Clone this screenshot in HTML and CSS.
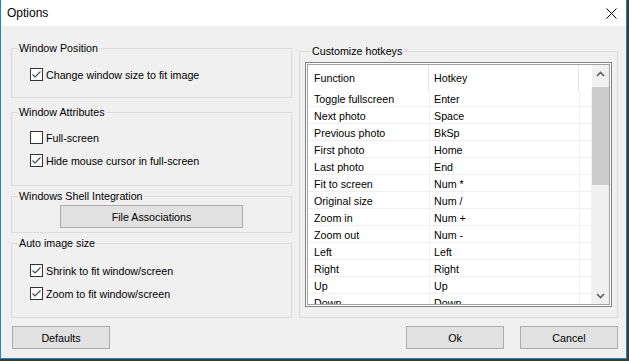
FILE: index.html
```html
<!DOCTYPE html>
<html>
<head>
<meta charset="utf-8">
<link rel="stylesheet" href="styles.css">
</head>
<body>
<div class="window">
  <div class="titlebar">
    <span class="title">Options</span>
    <svg class="close" width="11" height="11" viewBox="0 0 11 11"><path d="M0.5 0.5 L10.5 10.5 M10.5 0.5 L0.5 10.5" stroke="#000" stroke-width="1" fill="none"/></svg>
  </div>
  <div class="content">
    <div class="left">
      <fieldset class="group g1">
        <legend>Window Position</legend>
        <div class="check first"><span class="box"><svg width="11" height="11" viewBox="0 0 11 11"><path d="M1.5 5.5 L4 8 L9.5 2.5" stroke="#444" stroke-width="1.1" fill="none"/></svg></span>Change window size to fit image</div>
      </fieldset>
      <fieldset class="group g2">
        <legend>Window Attributes</legend>
        <div class="check first"><span class="box"></span>Full-screen</div>
        <div class="check"><span class="box"><svg width="11" height="11" viewBox="0 0 11 11"><path d="M1.5 5.5 L4 8 L9.5 2.5" stroke="#444" stroke-width="1.1" fill="none"/></svg></span>Hide mouse cursor in full-screen</div>
      </fieldset>
      <fieldset class="group g3">
        <legend>Windows Shell Integration</legend>
        <button class="btn assoc">File Associations</button>
      </fieldset>
      <fieldset class="group g4">
        <legend>Auto image size</legend>
        <div class="check first"><span class="box"><svg width="11" height="11" viewBox="0 0 11 11"><path d="M1.5 5.5 L4 8 L9.5 2.5" stroke="#444" stroke-width="1.1" fill="none"/></svg></span>Shrink to fit window/screen</div>
        <div class="check"><span class="box"><svg width="11" height="11" viewBox="0 0 11 11"><path d="M1.5 5.5 L4 8 L9.5 2.5" stroke="#444" stroke-width="1.1" fill="none"/></svg></span>Zoom to fit window/screen</div>
      </fieldset>
    </div>
    <fieldset class="group hotkeys">
      <legend>Customize hotkeys</legend>
      <div class="listview">
        <div class="lv-inner">
          <div class="lv-main">
            <div class="lv-header">
              <div class="hc c1">Function</div>
              <div class="hc c2">Hotkey</div>
              <div class="hc c3"></div>
            </div>
            <div class="lv-rows">
              <div class="row"><div class="cell c1">Toggle fullscreen</div><div class="cell c2">Enter</div><div class="cell c3"></div></div>
              <div class="row"><div class="cell c1">Next photo</div><div class="cell c2">Space</div><div class="cell c3"></div></div>
              <div class="row"><div class="cell c1">Previous photo</div><div class="cell c2">BkSp</div><div class="cell c3"></div></div>
              <div class="row"><div class="cell c1">First photo</div><div class="cell c2">Home</div><div class="cell c3"></div></div>
              <div class="row"><div class="cell c1">Last photo</div><div class="cell c2">End</div><div class="cell c3"></div></div>
              <div class="row"><div class="cell c1">Fit to screen</div><div class="cell c2">Num *</div><div class="cell c3"></div></div>
              <div class="row"><div class="cell c1">Original size</div><div class="cell c2">Num /</div><div class="cell c3"></div></div>
              <div class="row"><div class="cell c1">Zoom in</div><div class="cell c2">Num +</div><div class="cell c3"></div></div>
              <div class="row"><div class="cell c1">Zoom out</div><div class="cell c2">Num -</div><div class="cell c3"></div></div>
              <div class="row"><div class="cell c1">Left</div><div class="cell c2">Left</div><div class="cell c3"></div></div>
              <div class="row"><div class="cell c1">Right</div><div class="cell c2">Right</div><div class="cell c3"></div></div>
              <div class="row"><div class="cell c1">Up</div><div class="cell c2">Up</div><div class="cell c3"></div></div>
              <div class="row"><div class="cell c1">Down</div><div class="cell c2">Down</div><div class="cell c3"></div></div>
            </div>
          </div>
          <div class="scrollbar">
            <div class="sb-btn"><svg width="9" height="6" viewBox="0 0 9 6"><path d="M1 5 L4.5 1.5 L8 5" stroke="#606060" stroke-width="1.6" fill="none"/></svg></div>
            <div class="sb-track"><div class="sb-thumb"></div></div>
            <div class="sb-btn"><svg width="9" height="6" viewBox="0 0 9 6"><path d="M1 1 L4.5 4.5 L8 1" stroke="#606060" stroke-width="1.6" fill="none"/></svg></div>
          </div>
        </div>
      </div>
    </fieldset>
  </div>
  <div class="footer">
    <button class="btn">Defaults</button>
    <div class="spacer"></div>
    <button class="btn">Ok</button>
    <button class="btn">Cancel</button>
  </div>
</div>
</body>
</html>
```

FILE: styles.css
```css
html, body {
  margin: 0;
  padding: 0;
}
body {
  width: 629px;
  height: 361px;
  background: #3d3d24;
  font-family: "Liberation Sans", Arial, sans-serif;
  font-size: 10.7px;
  color: #000;
  overflow: hidden;
}
.window {
  width: 627px;
  height: 359px;
  box-sizing: border-box;
  border: 1px solid #1883d7;
  border-top: none;
  background: #f0f0f0;
  display: flex;
  flex-direction: column;
}
.titlebar {
  height: 26px;
  background: #fff;
  display: flex;
  align-items: center;
  padding-left: 6px;
  padding-right: 9px;
  flex: none;
}
.title {
  font-size: 12px;
  flex: 1;
}
.close {
  display: block;
  margin-top: 1px;
}
.content {
  display: flex;
  padding: 15px 8px 0 10px;
  gap: 7px;
  flex: none;
}
.left {
  width: 281px;
  display: flex;
  flex-direction: column;
}
.group {
  margin: 0;
  padding: 0;
  border: 1px solid #dcdcdc;
  box-sizing: border-box;
  min-width: 0;
}
.group legend {
  padding: 0 1px;
  margin-left: 6px;
  line-height: 14px;
  height: 14px;
}
.g1 { height: 57px; }
.g2 { height: 81px; margin-top: 7px; }
.g3 { height: 44px; margin-top: 3px; }
.g4 { height: 82px; margin-top: 3px; }
.check {
  display: flex;
  align-items: center;
  height: 17px;
  padding-left: 18px;
  margin-top: 6px;
}
.g1 .check.first { margin-top: 11px; }
.g2 .check.first { margin-top: 10px; }
.g4 .check.first { margin-top: 12px; }
.box {
  width: 13px;
  height: 13px;
  box-sizing: border-box;
  border: 1px solid #333;
  background: #fff;
  margin-right: 3px;
  flex: none;
  display: flex;
  align-items: center;
  justify-content: center;
}
.box svg { display: block; }
.btn {
  font-family: inherit;
  font-size: inherit;
  color: #000;
  background: #e1e1e1;
  border: 1px solid #adadad;
  border-radius: 0;
  width: 98px;
  height: 23px;
  padding: 0;
  margin: 0;
}
.assoc {
  display: block;
  width: 183px;
  margin: 2px 0 0 48px;
}
.hotkeys {
  width: 319px;
  height: 274px;
  margin-top: 3px;
  padding: 4px 0 0 5px;
}
.listview {
  width: 307px;
  height: 245px;
  box-sizing: border-box;
  border: 1px solid #828282;
  padding: 1px;
  background: #fff;
}
.lv-inner {
  height: 100%;
  box-sizing: border-box;
  border: 1px solid #a0a0a0;
  display: flex;
  overflow: hidden;
}
.lv-main {
  flex: 1;
  overflow: hidden;
}
.lv-header {
  display: flex;
  height: 25px;
}
.hc {
  display: flex;
  align-items: center;
  padding-left: 6px;
  padding-top: 1px;
  box-sizing: border-box;
  border-right: 1px solid #e5e5e5;
}
.c1 { width: 121px; }
.c2 { width: 150px; }
.hc.c2 { padding-left: 5px; }
.c3 { flex: 1; border-right: none; }
.row {
  display: flex;
  height: 17px;
  box-sizing: border-box;
  border-bottom: 1px solid #f0f0f0;
}
.cell {
  display: flex;
  align-items: center;
  padding-left: 6px;
  padding-top: 1px;
  box-sizing: border-box;
  border-right: 1px solid #f0f0f0;
}
.row .c1 { width: 122px; }
.row .c2 { padding-left: 4px; }
.scrollbar {
  width: 17px;
  background: #f0f0f0;
  display: flex;
  flex-direction: column;
  flex: none;
}
.sb-btn {
  height: 17px;
  display: flex;
  align-items: center;
  justify-content: center;
  flex: none;
}
.sb-track {
  flex: 1;
  padding-top: 5px;
}
.sb-thumb {
  height: 98px;
  background: #cdcdcd;
}
.footer {
  display: flex;
  padding: 8px 8px 0 11px;
  gap: 16px;
}
.spacer { flex: 1; }
```
